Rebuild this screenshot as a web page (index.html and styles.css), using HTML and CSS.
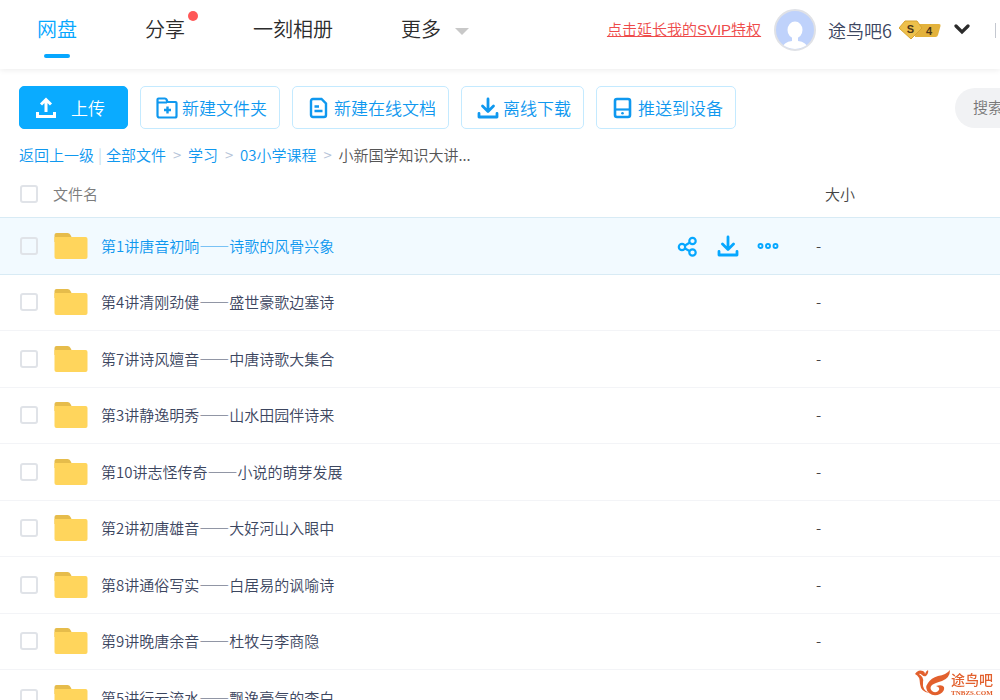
FILE: index.html
```html
<!DOCTYPE html>
<html lang="zh-CN">
<head>
<meta charset="utf-8">
<title>网盘</title>
<link rel="stylesheet" href="styles.css">
</head>
<body>
<svg class="defs" aria-hidden="true">
  <symbol id="download" viewBox="0 0 22 22"><path d="M11 2v12M5.500 9l5.500 5.500L16.500 9M2 16.500V20h18v-3.500" fill="none" stroke="currentColor" stroke-width="2.800" stroke-linejoin="round" stroke-linecap="round"/></symbol>
  <symbol id="folder" viewBox="0 0 34 28"><path d="M1 3Q1 1 3 1h11q2 0 3 2l1 2v5H1z" fill="#e6bc4b"/><path d="M1 5h31q2 0 2 2v18q0 2-2 2H3q-2 0-2-2z" fill="#ffd55c"/></symbol>
</svg>
<div class="app">
  <header class="header">
    <nav class="nav">
      <a href="#" class="nav-item active">网盘</a>
      <a href="#" class="nav-item">分享<span class="dot"></span></a>
      <a href="#" class="nav-item">一刻相册</a>
      <a href="#" class="nav-item">更多<span class="caret"></span></a>
    </nav>
    <div class="account">
      <a href="#" class="promo">点击延长我的SVIP特权</a>
      <svg class="avatar" viewBox="0 0 42 42" aria-hidden="true"><defs><clipPath id="face"><circle cx="21" cy="21" r="19"/></clipPath></defs><circle cx="21" cy="21" r="20" fill="#bfd2fb" stroke="#dfe1e6" stroke-width="2"/><g clip-path="url(#face)" fill="#fff"><ellipse cx="21" cy="21" rx="7.500" ry="8.500"/><path d="M18 28h6v4q9 1 11 9H7q2-8 11-9z"/></g></svg>
      <span class="user">途鸟吧6</span>
      <svg class="level" viewBox="0 0 42 20" aria-hidden="true"><path d="M17 4h23q2 0 1.500 2l-2.500 9q-.5 2-2.500 2H16z" fill="#e3b23c"/><path d="M6 1h12l5 7-11 11L0 8z" fill="#edc04b" stroke="#d7a32e"/><text x="11.500" y="13" class="level-text">S</text><text x="30" y="14.500" class="level-text">4</text></svg>
      <svg class="chevron" viewBox="0 0 16 12" aria-hidden="true"><path d="M2 2l6 6 6-6" fill="none" stroke="#2b2b2b" stroke-width="3.200" stroke-linecap="round"/></svg>
      <span class="divider"></span>
    </div>
  </header>

  <div class="toolbar">
    <button class="btn primary"><svg viewBox="0 0 22 22"><path d="M11 15V3M6 7.500L11 2.500l5 5M2.500 15v4.500h17V15" fill="none" stroke="currentColor" stroke-width="3"/></svg>上传</button>
    <button class="btn"><svg viewBox="0 0 22 22"><path d="M1.500 18.500v-16q0-1 1-1H9q1 0 1.500 1l1 2.500h8q1 0 1 1V19q0 1.500-1.500 1.500H3.500q-2 0-2-2zM2 5.500h9" fill="none" stroke="currentColor" stroke-width="2.200"/><path d="M11.500 9.500v7M8 13h7" stroke="currentColor" stroke-width="2.400"/></svg>新建文件夹</button>
    <button class="btn"><svg viewBox="0 0 22 22"><path d="M5 2h8.500L18 6.500V18q0 2-2 2H5q-2 0-2-2V4q0-2 2-2zM6.500 9.500H11M6.500 14h8" fill="none" stroke="currentColor" stroke-width="2.400"/></svg>新建在线文档</button>
    <button class="btn"><svg><use href="#download"/></svg>离线下载</button>
    <button class="btn"><svg viewBox="0 0 22 22"><rect x="3" y="2" width="15" height="18" rx="2" fill="none" stroke="currentColor" stroke-width="2.600"/><path d="M4 12.500h14" stroke="currentColor" stroke-width="2.200"/><circle cx="10.500" cy="16.200" r="1.300" fill="currentColor"/></svg>推送到设备</button>
    <input class="search" type="search" placeholder="搜索您的文件" aria-label="搜索">
  </div>

  <nav class="crumbs">
    <a href="#">返回上一级</a><span class="bar">|</span><a href="#">全部文件</a><span class="sep">&gt;</span><a href="#">学习</a><span class="sep">&gt;</span><a href="#">03小学课程</a><span class="sep">&gt;</span><span class="current">小新国学知识大讲...</span>
  </nav>

  <main class="list">
    <table class="files">
      <thead>
        <tr><th class="check"><input type="checkbox" aria-label="全选"></th><th class="name">文件名</th><th class="actions"></th><th class="size">大小</th></tr>
      </thead>
      <tbody>
        <tr class="selected"><td class="check"><input type="checkbox" aria-label="第1讲"></td><td class="name"><div class="file"><svg><use href="#folder"/></svg><a href="#">第1讲唐音初响——诗歌的风骨兴象</a></div></td>
          <td class="actions"><div class="tools">
            <button aria-label="分享"><svg viewBox="0 0 22 22"><g fill="none" stroke="currentColor" stroke-width="2.200"><circle cx="5" cy="12" r="3.200"/><circle cx="15.500" cy="6" r="3.200"/><circle cx="15.500" cy="17.500" r="3.200"/><path d="M8 10.500l4.500-2.700M8 13.500l4.500 2.500"/></g></svg></button>
            <button aria-label="下载"><svg><use href="#download"/></svg></button>
            <button aria-label="更多"><svg viewBox="0 0 22 22"><g fill="none" stroke="currentColor" stroke-width="1.900"><circle cx="3.500" cy="11" r="2"/><circle cx="11" cy="11" r="2"/><circle cx="18.500" cy="11" r="2"/></g></svg></button>
          </div></td><td class="size">-</td></tr>
        <tr><td class="check"><input type="checkbox" aria-label="第4讲"></td><td class="name"><div class="file"><svg><use href="#folder"/></svg><a href="#">第4讲清刚劲健——盛世豪歌边塞诗</a></div></td><td></td><td class="size">-</td></tr>
        <tr><td class="check"><input type="checkbox" aria-label="第7讲"></td><td class="name"><div class="file"><svg><use href="#folder"/></svg><a href="#">第7讲诗风嬗音——中唐诗歌大集合</a></div></td><td></td><td class="size">-</td></tr>
        <tr><td class="check"><input type="checkbox" aria-label="第3讲"></td><td class="name"><div class="file"><svg><use href="#folder"/></svg><a href="#">第3讲静逸明秀——山水田园伴诗来</a></div></td><td></td><td class="size">-</td></tr>
        <tr><td class="check"><input type="checkbox" aria-label="第10讲"></td><td class="name"><div class="file"><svg><use href="#folder"/></svg><a href="#">第10讲志怪传奇——小说的萌芽发展</a></div></td><td></td><td class="size">-</td></tr>
        <tr><td class="check"><input type="checkbox" aria-label="第2讲"></td><td class="name"><div class="file"><svg><use href="#folder"/></svg><a href="#">第2讲初唐雄音——大好河山入眼中</a></div></td><td></td><td class="size">-</td></tr>
        <tr><td class="check"><input type="checkbox" aria-label="第8讲"></td><td class="name"><div class="file"><svg><use href="#folder"/></svg><a href="#">第8讲通俗写实——白居易的讽喻诗</a></div></td><td></td><td class="size">-</td></tr>
        <tr><td class="check"><input type="checkbox" aria-label="第9讲"></td><td class="name"><div class="file"><svg><use href="#folder"/></svg><a href="#">第9讲晚唐余音——杜牧与李商隐</a></div></td><td></td><td class="size">-</td></tr>
        <tr><td class="check"><input type="checkbox" aria-label="第5讲"></td><td class="name"><div class="file"><svg><use href="#folder"/></svg><a href="#">第5讲行云流水——飘逸豪气的李白</a></div></td><td></td><td class="size"></td></tr>
      </tbody>
    </table>
  </main>

  <div class="mark">
    <svg viewBox="0 0 36 28" aria-hidden="true"><g fill="#e2602d"><path d="M0 5Q3 0 8 2q2 1 2 3 1-3 3-4 1 3-2 6-2 1-4-1-2-2-3-1 5 3 4 8-1 8 6 11-8-1-9-9Q5 7 0 5z"/><path d="M35 1q0 8-8 11-7 2-10 4-3 3 0 6 4 3 7-1 1-3-3-4 6-2 8 1 1 4-4 7-6 3-11-1-5-5-1-10Q16 9 23 7q8-1 12-6z"/></g></svg>
    <div class="mark-text"><span class="mark-name">途鸟吧</span><span class="mark-url">TNBZS.COM</span></div>
  </div>
</div>
</body>
</html>
```
FILE: styles.css
```css
* { box-sizing: border-box; }
body {
  margin: 0;
  background: #fff;
  color: #3c465f;
  font: 350 15px/20px "Noto Sans CJK SC", "Noto Sans", sans-serif;
}
a { color: inherit; text-decoration: none; }
button, input { font: inherit; }
.defs { position: absolute; width: 0; height: 0; }
.app { height: 100vh; display: flex; flex-direction: column; overflow: hidden; }

.header {
  flex: none;
  height: 69px;
  display: flex;
  justify-content: space-between;
  padding-left: 37px;
  box-shadow: 0 1px 6px rgba(0, 0, 0, 0.08);
}
.nav { display: flex; gap: 68px; font-size: 20px; line-height: 28px; color: #2c2c2c; }
.nav-item { position: relative; padding-top: 15px; white-space: nowrap; }
.nav-item.active { color: #06a7ff; }
.nav-item.active::after {
  content: "";
  display: block;
  width: 26px;
  height: 4px;
  margin: 11px auto 0;
  border-radius: 2px;
  background: #06a7ff;
}
.dot { position: absolute; top: 11px; right: -13px; width: 10px; height: 10px; border-radius: 50%; background: #ff5757; }
.caret {
  display: inline-block;
  margin-left: 14px;
  border: 7px solid transparent;
  border-top-color: #c8c8c8;
  border-bottom: 0;
  vertical-align: 2px;
}
.account { display: flex; align-items: center; height: 60px; white-space: nowrap; }
.promo { color: #ee4b4b; text-decoration: underline; font-family: "Liberation Sans", "Noto Sans CJK SC", sans-serif; }
.avatar { width: 42px; height: 42px; margin: 0 12px 0 13px; }
.user { font-size: 18px; }
.level { width: 42px; height: 20px; margin: 0 13px 0 7px; }
.level-text { font: 700 11px "Liberation Sans", sans-serif; fill: #4b3518; text-anchor: middle; }
.chevron { width: 16px; height: 12px; margin-right: 25px; }
.divider { width: 5px; height: 15px; border-left: 1px solid #c4c8d0; }

.toolbar { flex: none; display: flex; gap: 12px; padding: 17px 0 0 19px; }
.btn {
  flex: none;
  height: 43px;
  display: flex;
  align-items: center;
  gap: 4px;
  padding: 0 12px 0 15px;
  border: 1px solid #c4eaff;
  border-radius: 5px;
  background: #fff;
  color: #0f98ef;
  font-size: 17px;
}
.btn svg { width: 22px; height: 22px; }
.primary { gap: 14px; padding: 0 22px 0 15px; background: #0aabff; border-color: #0aabff; color: #fff; }
.search {
  flex: none;
  width: 280px;
  height: 40px;
  margin: 2px -235px 0 auto;
  padding: 0 18px 3px;
  border: 0;
  border-radius: 20px;
  background: #f1f2f4;
}
.search::placeholder { color: #777; opacity: 1; }

.crumbs { flex: none; display: flex; align-items: center; height: 28px; margin: 12px 0 2px; padding-left: 19px; color: #0f98ef; white-space: nowrap; }
.bar { width: 12px; text-align: center; color: #c4d8e8; }
.sep { width: 22px; text-align: center; color: #b4c3d8; }
.current { color: #555; }

.list { flex: 1; min-height: 0; overflow: hidden; }
.files { width: 100%; border-collapse: collapse; table-layout: fixed; }
.files th, .files td { padding: 0; text-align: left; font-weight: 350; }
.files th { height: 46px; }
.files td { height: 57px; border-top: 1px solid #f3f4f7; }
.files tr:nth-child(even) td { height: 56px; }
.files .selected td { background: #f2faff; border-top-color: #d8ebf5; border-bottom: 1px solid #d8ebf5; }
.files .selected { color: #0f98ef; }
.files .check { width: 53px; padding-left: 20px; }
.files .actions { width: 139px; }
.files .size { width: 184px; color: #444; }
.files thead th { color: #7c7c7c; }
.files th.size { padding-left: 9px; }
.check input {
  display: block;
  appearance: none;
  width: 18px;
  height: 18px;
  margin: 0;
  border: 2px solid #e0e3e8;
  border-radius: 3px;
}
.file { display: flex; align-items: center; gap: 13px; white-space: nowrap; }
.file svg { width: 35px; height: 28px; }
.tools { display: flex; gap: 18px; }
.tools button { display: flex; padding: 0; border: 0; background: none; color: #06a7ff; }
.tools svg { width: 22px; height: 22px; }

.mark { position: fixed; right: 7px; bottom: 3px; display: flex; align-items: center; color: #e2602d; }
.mark svg { width: 36px; height: 28px; }
.mark-text { display: flex; flex-direction: column; }
.mark-name { font-size: 14px; line-height: 20px; font-weight: 500; }
.mark-url { font: 700 7px/8px "Liberation Serif", serif; }
```
